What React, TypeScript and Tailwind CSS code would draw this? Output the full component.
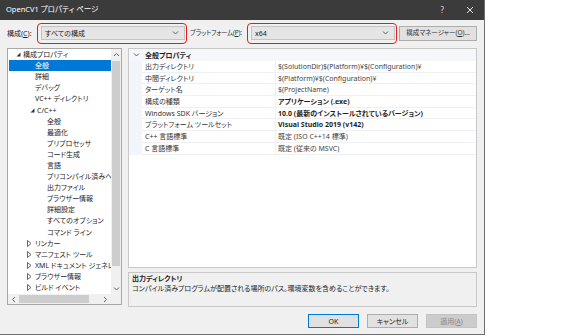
import React from "react";

const FONT =
  "[font-family:'Noto_Sans','Noto_Sans_CJK_JP',sans-serif] [font-feature-settings:'palt']";

type TreeRow = { t: string; pl: number; icon?: "exp" | "col"; sel?: boolean };

const tree: TreeRow[] = [
  { t: "構成プロパティ", pl: 8, icon: "exp" },
  { t: "全般", pl: 27, sel: true },
  { t: "詳細", pl: 27 },
  { t: "デバッグ", pl: 27 },
  { t: "VC++ ディレクトリ", pl: 27 },
  { t: "C/C++", pl: 22, icon: "exp" },
  { t: "全般", pl: 39 },
  { t: "最適化", pl: 39 },
  { t: "プリプロセッサ", pl: 39 },
  { t: "コード生成", pl: 39 },
  { t: "言語", pl: 39 },
  { t: "プリコンパイル済みヘッダー", pl: 39 },
  { t: "出力ファイル", pl: 39 },
  { t: "ブラウザー情報", pl: 39 },
  { t: "詳細設定", pl: 39 },
  { t: "すべてのオプション", pl: 39 },
  { t: "コマンド ライン", pl: 39 },
  { t: "リンカー", pl: 19, icon: "col" },
  { t: "マニフェスト ツール", pl: 19, icon: "col" },
  { t: "XML ドキュメント ジェネレーター", pl: 19, icon: "col" },
  { t: "ブラウザー情報", pl: 19, icon: "col" },
  { t: "ビルド イベント", pl: 19, icon: "col" },
];

const props: { n: string; v: string; b?: boolean }[] = [
  { n: "出力ディレクトリ", v: "$(SolutionDir)$(Platform)¥$(Configuration)¥" },
  { n: "中間ディレクトリ", v: "$(Platform)¥$(Configuration)¥" },
  { n: "ターゲット名", v: "$(ProjectName)" },
  { n: "構成の種類", v: "アプリケーション (.exe)", b: true },
  { n: "Windows SDK バージョン", v: "10.0 (最新のインストールされているバージョン)", b: true },
  { n: "プラットフォーム ツールセット", v: "Visual Studio 2019 (v142)", b: true },
  { n: "C++ 言語標準", v: "既定 (ISO C++14 標準)" },
  { n: "C 言語標準", v: "既定 (従来の MSVC)" },
];

function ExpTri() {
  return (
    <svg width="7" height="5" viewBox="0 0 7 5" className="shrink-0">
      <polygon points="4.5,0.5 4.5,4.5 0.5,4.5" fill="#333" />
    </svg>
  );
}
function ColTri() {
  return (
    <svg width="8" height="7" viewBox="0 0 8 7" className="shrink-0">
      <polygon points="0.5,0.5 4,3.5 0.5,6.5" fill="none" stroke="#555" strokeWidth="0.9" />
    </svg>
  );
}
function Chev({ dir }: { dir: "up" | "down" | "left" | "right" }) {
  const pts =
    dir === "up"
      ? "1,4 3.5,1.5 6,4"
      : dir === "down"
      ? "1,1.5 3.5,4 6,1.5"
      : dir === "left"
      ? "4,1 1.5,3.5 4,6"
      : "2,1 4.5,3.5 2,6";
  const w = dir === "up" || dir === "down" ? 7 : 6;
  const h = dir === "up" || dir === "down" ? 5.5 : 7;
  return (
    <svg width={w} height={h} viewBox={`0 0 ${w} ${h}`}>
      <polyline points={pts} fill="none" stroke="#606060" strokeWidth="1" />
    </svg>
  );
}

function Combo({ text }: { text: string }) {
  return (
    <div className="shrink-0 w-[150px] h-[21px] rounded-[4px] border-[1.5px] border-[#e41b1b] pl-[3px] pr-[1.5px] pt-[2.5px]">
      <div className="h-[14px] bg-[#e5e5e5] border border-[#c4c4c4] flex items-center pl-[3px] pr-[5px] justify-between">
        <span className="text-[7px] text-[#1e1e1e] leading-none">{text}</span>
        <Chev dir="down" />
      </div>
    </div>
  );
}

export default function App() {
  return (
    <div className={`w-[576px] h-[336px] bg-white overflow-hidden ${FONT}`}>
      <div className="w-[485px] h-[335px] bg-[#f0f0f0] border-r border-b border-[#6e6e6e] flex flex-col">
        {/* title bar */}
        <div className="h-[20px] bg-[#3b3b3b] flex items-center pl-[6px] pr-[10px] text-white">
          <span className="text-[7.5px] leading-none">OpenCV1 プロパティ ページ</span>
          <span className="ml-auto text-[8px] leading-none mr-[22px] text-[#dcdcdc]">?</span>
          <svg width="8" height="8" viewBox="0 0 8 8">
            <path d="M1 1 L7 7 M7 1 L1 7" stroke="#e6e6e6" strokeWidth="1" />
          </svg>
        </div>

        {/* toolbar */}
        <div className="h-[26px] flex items-center pl-[7px] text-[7px] text-[#1e1e1e]">
          <span className="w-[30px] shrink-0 leading-none">
            構成(<span className="underline">C</span>):
          </span>
          <Combo text="すべての構成" />
          <span className="w-[60px] shrink-0 pl-[3px] leading-none whitespace-nowrap text-[6.5px] tracking-[-0.2px] text-[#333]">
            プラットフォーム(<span className="underline">P</span>):
          </span>
          <Combo text="x64" />
          <div className="shrink-0 ml-[2px] w-[78px] h-[15px] bg-[#e1e1e1] border border-[#adadad] flex items-center justify-center leading-none text-[#333] whitespace-nowrap text-[6.5px]">
            構成マネージャー(<span className="underline">O</span>)...
          </div>
        </div>

        {/* main */}
        <div className="mt-[2px] flex items-start pl-[7px] gap-[6px]">
          {/* tree */}
          <div className="w-[115px] h-[257px] bg-white border border-[#a8a8a8] flex flex-col">
            <div className="flex flex-1 min-h-0">
              <div className="flex-1 min-w-0 overflow-hidden pl-[1px]">
                {tree.map((r, i) => (
                  <div
                    key={i}
                    className={`h-[11.1px] flex items-center whitespace-nowrap text-[7px] leading-none ${
                      r.sel ? "bg-[#0078d7] text-white" : "text-[#1e1e1e]"
                    }`}
                    style={{ paddingLeft: r.pl - 1 }}
                  >
                    {r.icon === "exp" && <ExpTri />}
                    {r.icon === "col" && <ColTri />}
                    <span>{r.t}</span>
                  </div>
                ))}
              </div>
              <div className="w-[10px] bg-[#f0f0f0] flex flex-col items-center">
                <div className="h-[12px] flex items-center justify-center">
                  <Chev dir="up" />
                </div>
                <div className="w-[8px] h-[205px] bg-[#cdcdcd]" />
                <div className="flex-1" />
                <div className="h-[10px] flex items-center justify-center">
                  <Chev dir="down" />
                </div>
              </div>
            </div>
            <div className="h-[10px] flex bg-[#f0f0f0]">
              <div className="w-[11px] flex items-center justify-center">
                <Chev dir="left" />
              </div>
              <div className="w-[70px] h-[8px] mt-[1px] bg-[#cdcdcd]" />
              <div className="flex-1 flex items-center justify-end pr-[3px]">
                <Chev dir="right" />
              </div>
              <div className="w-[10px] bg-[#f0f0f0]" />
            </div>
          </div>

          {/* right column */}
          <div className="w-[349px] flex flex-col gap-[4px]">
            <div className="h-[220px] bg-white border border-[#c8c8c8] flex flex-col">
              <div className="h-[12px] bg-[#f5f7fb] flex items-center text-[7px] leading-none text-[#1e1e1e]">
                <div className="w-[13px] flex justify-center pl-[1px]">
                  <Chev dir="down" />
                </div>
                <span className="font-bold ml-[3px]">全般プロパティ</span>
              </div>
              {props.map((p, i) => (
                <div key={i} className="h-[11.7px] flex text-[7px] leading-none">
                  <div className="w-[13px] bg-[#f2f5fa]" />
                  <div className="w-[133px] border-b border-[#eef0f4] flex items-center pl-[3px] text-[#333] whitespace-nowrap">
                    {p.n}
                  </div>
                  <div
                    className={`flex-1 border-l border-b border-[#eef0f4] flex items-center pl-[2px] whitespace-nowrap ${
                      p.b ? "font-bold text-[#1e1e1e]" : "text-[#444]"
                    }`}
                  >
                    {p.v}
                  </div>
                </div>
              ))}
            </div>
            <div className="h-[35px] border border-[#c8c8c8] bg-[#f0f0f0] px-[3px] text-[7px] text-[#1e1e1e]">
              <div className="font-bold leading-[9px] h-[9px] mt-[0.5px]">出力ディレクトリ</div>
              <div className="leading-[12px]">
                コンパイル済みプログラムが配置される場所のパス。環境変数を含めることができます。
              </div>
            </div>
          </div>
        </div>

        {/* buttons */}
        <div className="mt-[7px] flex justify-end gap-[8px] pr-[7px] text-[7px] leading-none">
          <div className="w-[51px] h-[14px] bg-[#e1e1e1] border border-[#0078d7] flex items-center justify-center text-[#1e1e1e]">
            OK
          </div>
          <div className="w-[51px] h-[14px] bg-[#e1e1e1] border border-[#adadad] flex items-center justify-center text-[#1e1e1e]">
            キャンセル
          </div>
          <div className="w-[51px] h-[14px] bg-[#cccccc] border border-[#c4c4c4] flex items-center justify-center text-[#8a8a8a]">
            適用(<span className="underline">A</span>)
          </div>
        </div>
      </div>
    </div>
  );
}
